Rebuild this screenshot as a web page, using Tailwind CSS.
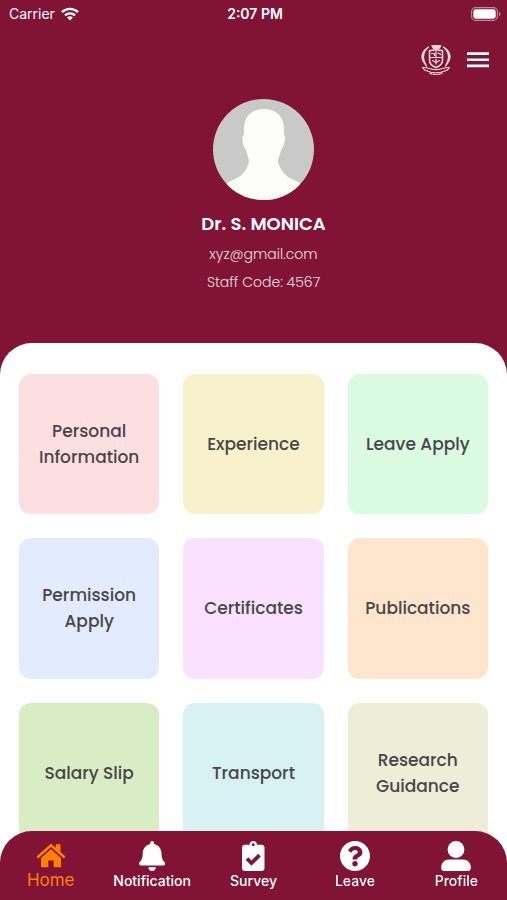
<!DOCTYPE html>
<html lang="en">
<head>
  <meta charset="UTF-8" />
  <meta name="viewport" content="width=device-width, initial-scale=1.0" />
  <title>Staff Portal – Home</title>
  <script src="https://cdn.jsdelivr.net/npm/@tailwindcss/browser@4"></script>
</head>
<body class="h-screen flex flex-col overflow-hidden bg-[#801336] text-white font-['Poppins','Inter',sans-serif]">

  <!-- Status bar -->
  <div class="grid grid-cols-3 items-center h-7 pl-[9px] pr-[6px] shrink-0 font-['Inter',sans-serif] text-sm">
    <div class="flex items-center gap-[6px]">
      <span>Carrier</span>
      <svg class="w-[18px] h-[14px]" viewBox="0 0 18 14" fill="none" stroke="currentColor" stroke-width="2.4"><path d="M1 5.2a11.4 11.4 0 0 1 16 0M4 8.4a7.2 7.2 0 0 1 10 0" /><path d="M9 13.6l-2.9-3a4.2 4.2 0 0 1 5.8 0z" fill="currentColor" stroke="none" /></svg>
    </div>
    <span class="text-center font-semibold">2:07 PM</span>
    <svg class="justify-self-end w-[30px] h-[14px]" viewBox="0 0 30 14"><rect x=".6" y=".6" width="25.8" height="12.8" rx="4" fill="none" stroke="#fff" stroke-opacity=".5" stroke-width="1.1" /><rect x="2.3" y="2.3" width="22.4" height="9.4" rx="2.4" fill="#fff" /><path d="M28 5v4q1.600-.6 1.600-2T28 5" fill="#fff" fill-opacity=".5" /></svg>
  </div>

  <!-- Header -->
  <header class="shrink-0">
    <div class="flex justify-end items-center gap-3 h-16 pr-[15px]">
      <svg class="w-8 h-8" viewBox="0 0 32 32" fill="none" stroke="#f3dbe3" stroke-linecap="round" stroke-linejoin="round">
        <path d="M12 1.500h9l-1.500 3.300h-6z" fill="#f3dbe3" stroke-width=".8" />
        <path d="M9.500 6.500q3.500.5 6.500-1.300 3 1.800 6.500 1.300v9.500q0 5-6.500 7.500-6.500-2.500-6.500-7.500z" stroke-width="1.500" />
        <path d="M10 13.500h12M16 6v7M11.500 9.500h3v2M18 9l3 1.500M12.500 16.500l3.500 2 3.500-2M16 15v5" stroke-width="1.200" />
        <path d="M8.500 3Q-3.500 11 6.500 22-.5 11 8.500 3zM23.500 3q12 8 2 19 7-11-2-19z" fill="#f3dbe3" stroke-width="1.200" />
        <path d="M2.500 23.500q4 0 6 .8 7.500 2.600 15 0 2-.8 6-.8l-2 2.500q-11.500 5.500-23 0z" stroke-width="1.200" />
        <path d="M10 29.500q6 1.800 12 0" stroke-width="1.200" stroke-dasharray="1.500 1.500" />
      </svg>
      <button type="button" aria-label="Menu" class="p-0.5">
        <svg class="w-[24px] h-[18px]" viewBox="0 0 24 18" fill="currentColor"><path d="M1 1.200h22v2.700H1zM1 7.400h22v2.700H1zM1 13.600h22v2.700H1z" /></svg>
      </button>
    </div>

    <div class="flex flex-col items-center pl-5 pt-[7px] pb-[51px]">
      <svg class="w-[101px] h-[101px] rounded-full bg-[#c9c9c9]" viewBox="0 0 101 101" fill="#fcfcfb"><path d="M51 10c13 0 20 8 20 20v6c2 0 1 5 0 9-1 3-2 5-3 6-1 5-3 8-3 12 2 7 6 13 12 16l10 5v17H14V84l10-5c6-3 10-9 12-16 0-4-2-7-3-12-1-1-2-3-3-6-1-4-1-9 1-9v-6c0-12 7-20 20-20z" /></svg>
      <h1 class="mt-3 text-lg leading-6 font-semibold">Dr. S. MONICA</h1>
      <p class="mt-2 text-sm leading-5 font-light text-white/85">xyz@gmail.com</p>
      <p class="mt-2 text-sm leading-5 font-light text-white/85">Staff Code: 4567</p>
    </div>
  </header>

  <!-- Tiles -->
  <main class="flex-1 min-h-0 overflow-y-auto [scrollbar-width:none] rounded-t-[32px] bg-white px-[19px] pt-[31px] pb-24">
    <div class="grid grid-cols-3 gap-6 text-[17px] leading-[26px] font-medium text-[#474747]">
      <button type="button" class="aspect-square rounded-xl bg-[#fddfe1]">Personal Information</button>
      <button type="button" class="aspect-square rounded-xl bg-[#f7f2cc]">Experience</button>
      <button type="button" class="aspect-square rounded-xl bg-[#dafae1]">Leave Apply</button>
      <button type="button" class="aspect-square rounded-xl bg-[#e2ebff]">Permission Apply</button>
      <button type="button" class="aspect-square rounded-xl bg-[#fae1ff]">Certificates</button>
      <button type="button" class="aspect-square rounded-xl bg-[#ffe5cd]">Publications</button>
      <button type="button" class="aspect-square rounded-xl bg-[#d8edc4]">Salary Slip</button>
      <button type="button" class="aspect-square rounded-xl bg-[#d8f1f2]">Transport</button>
      <button type="button" class="aspect-square rounded-xl bg-[#ededd8]">Research Guidance</button>
    </div>
  </main>

  <!-- Bottom tabs -->
  <nav class="fixed inset-x-0 bottom-0 grid grid-cols-5 h-[69px] pt-[10px] rounded-t-[32px] bg-[#801336] font-['Inter',sans-serif] text-sm leading-5 font-medium">
    <a href="#" class="flex flex-col items-center text-[#ff8000] text-[17px] leading-5 font-normal">
      <svg class="w-[30px] h-[29px]" viewBox="0 1 30 29" fill="currentColor"><path d="M15 3.500l4.800 4.300V4.200h4.700v7.900l5 4.400-1.600 1.900L15 7 2.100 18.400.5 16.500z" /><path d="M15 9l10 8.900v9.300h-7.300v-6.700h-5.400v6.700H5v-9.300z" /></svg>
      Home
    </a>
    <a href="#" class="flex flex-col items-center">
      <svg class="h-[30px]" viewBox="0 0 448 512" fill="currentColor"><path d="M224 512c35.320 0 63.970-28.650 63.970-64H160.030c0 35.350 28.650 64 63.970 64zm215.390-149.710c-19.320-20.760-55.470-51.990-55.470-154.290 0-77.700-54.480-139.900-127.940-155.160V32c0-17.670-14.320-32-31.980-32s-31.980 14.330-31.980 32v20.840C118.560 68.100 64.080 130.300 64.080 208c0 102.300-36.150 133.530-55.470 154.290-6 6.450-8.660 14.160-8.610 21.710.11 16.400 12.980 32 32.100 32h383.800c19.120 0 32-15.600 32.100-32 .05-7.550-2.610-15.270-8.610-21.710z" /></svg>
      Notification
    </a>
    <a href="#" class="flex flex-col items-center">
      <svg class="h-[30px]" viewBox="0 0 384 512" fill="currentColor"><path d="M336 64h-80c0-35.300-28.700-64-64-64s-64 28.700-64 64H48C21.500 64 0 85.500 0 112v352c0 26.500 21.500 48 48 48h288c26.500 0 48-21.500 48-48V112c0-26.500-21.500-48-48-48zM192 40c13.300 0 24 10.700 24 24s-10.700 24-24 24-24-10.700-24-24 10.700-24 24-24zm121.200 231.800l-143 141.800c-4.700 4.700-12.300 4.600-17-.1l-82.600-83.300c-4.700-4.700-4.600-12.300.1-17L99.100 285c4.700-4.700 12.300-4.600 17 .1l46 46.400 106-105.200c4.700-4.700 12.300-4.600 17 .1l28.200 28.400c4.700 4.800 4.600 12.300-.1 17z" /></svg>
      Survey
    </a>
    <a href="#" class="flex flex-col items-center">
      <svg class="h-[30px]" viewBox="8 8 496 496" fill="currentColor"><path d="M504 256c0 136.997-111.043 248-248 248S8 392.997 8 256C8 119.083 119.043 8 256 8s248 111.083 248 248zM262.655 90c-54.497 0-89.255 22.957-116.549 63.758-3.536 5.286-2.353 12.415 2.715 16.258l34.699 26.310c5.205 3.947 12.621 3.008 16.665-2.122 17.864-22.658 30.113-35.797 57.303-35.797 20.429 0 45.698 13.148 45.698 32.958 0 14.976-12.363 22.667-32.534 33.976C247.128 238.528 216 254.941 216 296v4c0 6.627 5.373 12 12 12h56c6.627 0 12-5.373 12-12v-1.333c0-28.462 83.186-29.647 83.186-106.667 0-58.002-60.165-102-116.531-102zM256 338c-25.365 0-46 20.635-46 46 0 25.364 20.635 46 46 46s46-20.636 46-46c0-25.365-20.635-46-46-46z" /></svg>
      Leave
    </a>
    <a href="#" class="flex flex-col items-center">
      <svg class="w-[30px] h-[30px]" viewBox="0 0 30 30" fill="currentColor"><circle cx="15" cy="8.500" r="8.400" /><path d="M8 18.500h14c4.500 0 7.800 3.500 7.800 8v.7c0 1.600-1.200 2.800-2.800 2.800H3C1.400 30 .2 28.800.2 27.200v-.7c0-4.500 3.300-8 7.800-8z" /></svg>
      Profile
    </a>
  </nav>

</body>
</html>
